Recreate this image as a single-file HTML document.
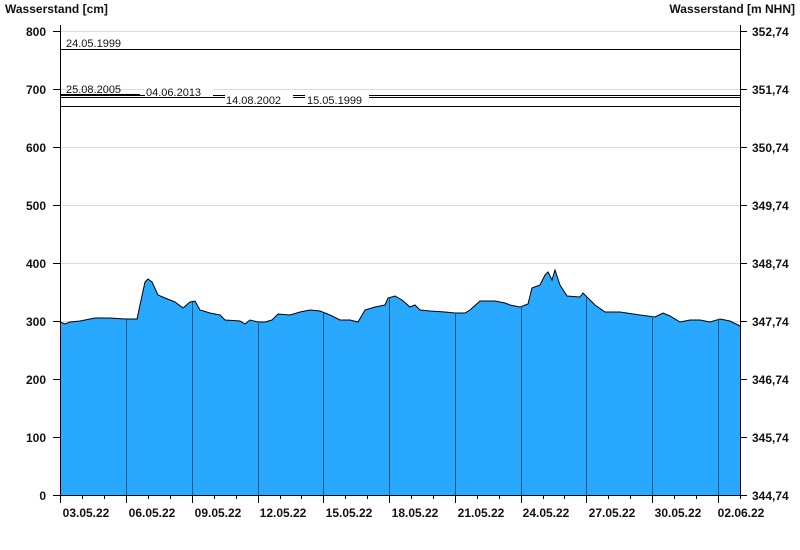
<!DOCTYPE html>
<html><head><meta charset="utf-8"><style>
body{margin:0;background:#fff;width:800px;height:550px;overflow:hidden}
svg{display:block;font-family:"Liberation Sans",Arial,sans-serif}
.b{font-weight:bold;font-size:12px;fill:#111}
.s{font-size:11px;fill:#111}
</style></head><body>
<svg width="800" height="550" viewBox="0 0 800 550">
<text x="5" y="13" class="b">Wasserstand [cm]</text>
<text x="795" y="13" class="b" text-anchor="end">Wasserstand [m NHN]</text>
<g stroke="#dcdcdc" stroke-width="1">
<line x1="60" x2="740" y1="31.5" y2="31.5"/><line x1="60" x2="740" y1="89.5" y2="89.5"/><line x1="60" x2="740" y1="147.5" y2="147.5"/><line x1="60" x2="740" y1="205.5" y2="205.5"/><line x1="60" x2="740" y1="263.5" y2="263.5"/><line x1="60" x2="740" y1="321.5" y2="321.5"/><line x1="60" x2="740" y1="379.5" y2="379.5"/><line x1="60" x2="740" y1="437.5" y2="437.5"/>
</g>
<polygon fill="#29a8ff" stroke="none" points="60,495 60,322 65,324 70,322 80,321 95,318 110,318 125,319 137,319 140,305 145,282 148,279 152,282 158,295 165,298 175,302 183,308 190,302 195,301 200,310 210,313 220,315 225,320 240,321 245,324 250,320 258,322 265,322 272,320 278,314 290,315 300,312 310,310 320,311 330,315 340,320 350,320 358,322 365,310 375,307 385,305 388,298 395,296 402,300 410,307 415,305 420,310 430,311 445,312 455,313 465,313 470,310 480,301 495,301 505,303 510,305 520,307 528,304 532,288 540,285 545,275 548,272 552,280 555,270 560,285 567,296 580,297 583,293 587,297 595,305 605,312 620,312 640,315 655,317 663,313 670,316 680,322 690,320 700,320 710,322 720,319 730,321 740,326 740,495"/>
<polyline fill="none" stroke="#000" stroke-width="1" points="60,322 65,324 70,322 80,321 95,318 110,318 125,319 137,319 140,305 145,282 148,279 152,282 158,295 165,298 175,302 183,308 190,302 195,301 200,310 210,313 220,315 225,320 240,321 245,324 250,320 258,322 265,322 272,320 278,314 290,315 300,312 310,310 320,311 330,315 340,320 350,320 358,322 365,310 375,307 385,305 388,298 395,296 402,300 410,307 415,305 420,310 430,311 445,312 455,313 465,313 470,310 480,301 495,301 505,303 510,305 520,307 528,304 532,288 540,285 545,275 548,272 552,280 555,270 560,285 567,296 580,297 583,293 587,297 595,305 605,312 620,312 640,315 655,317 663,313 670,316 680,322 690,320 700,320 710,322 720,319 730,321 740,326"/>
<g stroke="#1b5a80" stroke-width="1">
<line x1="126.5" x2="126.5" y1="318" y2="495"/><line x1="192.5" x2="192.5" y1="302" y2="495"/><line x1="258.5" x2="258.5" y1="322" y2="495"/><line x1="323.5" x2="323.5" y1="313" y2="495"/><line x1="389.5" x2="389.5" y1="298" y2="495"/><line x1="455.5" x2="455.5" y1="313" y2="495"/><line x1="521.5" x2="521.5" y1="306" y2="495"/><line x1="586.5" x2="586.5" y1="297" y2="495"/><line x1="652.5" x2="652.5" y1="316" y2="495"/><line x1="718.5" x2="718.5" y1="319" y2="495"/>
</g>
<g stroke="#000" stroke-width="1">
<line x1="60" x2="740" y1="49.5" y2="49.5"/>
<line x1="60" x2="140" y1="94.5" y2="94.5"/>
<line x1="60" x2="740" y1="95.5" y2="95.5"/>
<line x1="60" x2="740" y1="97.5" y2="97.5"/>
<line x1="60" x2="740" y1="106.5" y2="106.5"/>
</g>
<rect x="145" y="85" width="68" height="12" fill="#fff"/>
<rect x="225" y="93" width="68" height="12" fill="#fff"/>
<rect x="305" y="93" width="64" height="12" fill="#fff"/>
<g class="s">
<text x="66" y="47">24.05.1999</text>
<text x="66" y="93">25.08.2005</text>
<text x="146" y="96">04.06.2013</text>
<text x="226" y="104">14.08.2002</text>
<text x="307" y="104">15.05.1999</text>
</g>
<g stroke="#000" stroke-width="1">
<line x1="60.5" x2="60.5" y1="25" y2="501"/>
<line x1="740.5" x2="740.5" y1="25" y2="495"/>
<line x1="53" x2="740" y1="495.5" y2="495.5"/>
</g>
<g stroke="#000">
<line x1="53" x2="60" y1="31.5" y2="31.5"/><line x1="53" x2="60" y1="89.5" y2="89.5"/><line x1="53" x2="60" y1="147.5" y2="147.5"/><line x1="53" x2="60" y1="205.5" y2="205.5"/><line x1="53" x2="60" y1="263.5" y2="263.5"/><line x1="53" x2="60" y1="321.5" y2="321.5"/><line x1="53" x2="60" y1="379.5" y2="379.5"/><line x1="53" x2="60" y1="437.5" y2="437.5"/>
<line x1="740" x2="747" y1="31.5" y2="31.5"/><line x1="740" x2="747" y1="89.5" y2="89.5"/><line x1="740" x2="747" y1="147.5" y2="147.5"/><line x1="740" x2="747" y1="205.5" y2="205.5"/><line x1="740" x2="747" y1="263.5" y2="263.5"/><line x1="740" x2="747" y1="321.5" y2="321.5"/><line x1="740" x2="747" y1="379.5" y2="379.5"/><line x1="740" x2="747" y1="437.5" y2="437.5"/><line x1="740" x2="747" y1="495.5" y2="495.5"/>
</g>
<g class="b" text-anchor="end">
<text x="46" y="36">800</text><text x="46" y="94">700</text><text x="46" y="152">600</text><text x="46" y="210">500</text><text x="46" y="268">400</text><text x="46" y="326">300</text><text x="46" y="384">200</text><text x="46" y="442">100</text><text x="46" y="500">0</text>
</g>
<g class="b">
<text x="752" y="36">352,74</text><text x="752" y="94">351,74</text><text x="752" y="152">350,74</text><text x="752" y="210">349,74</text><text x="752" y="268">348,74</text><text x="752" y="326">347,74</text><text x="752" y="384">346,74</text><text x="752" y="442">345,74</text><text x="752" y="500">344,74</text>
</g>
<g stroke="#000">
<path d="M60.5 495v8M82.5 495v4M104.5 495v4M126.5 495v8M148.5 495v4M170.5 495v4M192.5 495v8M214.5 495v4M236.5 495v4M258.5 495v8M280.5 495v4M301.5 495v4M323.5 495v8M345.5 495v4M367.5 495v4M389.5 495v8M411.5 495v4M433.5 495v4M455.5 495v8M477.5 495v4M499.5 495v4M521.5 495v8M543.5 495v4M564.5 495v4M586.5 495v8M608.5 495v4M630.5 495v4M652.5 495v8M674.5 495v4M696.5 495v4M718.5 495v8M740.5 495v4"/>
</g>
<g class="b" text-anchor="middle">
<text x="86" y="517">03.05.22</text><text x="152" y="517">06.05.22</text><text x="218" y="517">09.05.22</text><text x="283" y="517">12.05.22</text><text x="349" y="517">15.05.22</text><text x="415" y="517">18.05.22</text><text x="481" y="517">21.05.22</text><text x="546" y="517">24.05.22</text><text x="612" y="517">27.05.22</text><text x="678" y="517">30.05.22</text><text x="741" y="517">02.06.22</text>
</g>
</svg>
</body></html>
